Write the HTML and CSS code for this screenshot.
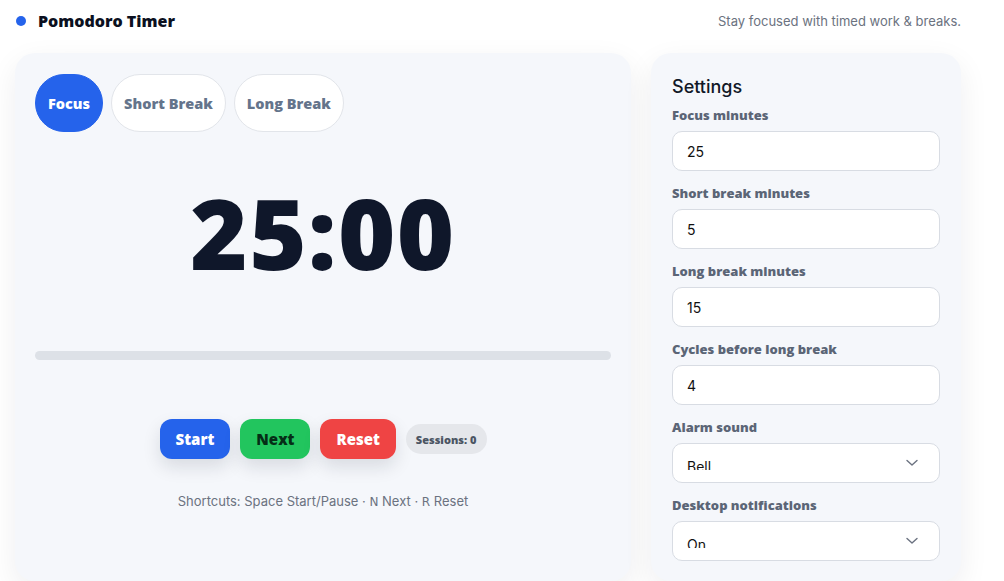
FILE: index.html
```html
<!DOCTYPE html>
<html lang="en">
<head>
<meta charset="utf-8">
<title>Pomodoro Timer</title>
<link rel="stylesheet" href="styles.css">
</head>
<body>
<div class="page">
  <header class="topbar">
    <div class="brand"><span class="dot"></span><span class="brand-name">Pomodoro Timer</span></div>
    <div class="tagline">Stay focused with timed work &amp; breaks.</div>
  </header>
  <main class="layout">
    <section class="card timer-card">
      <div class="tabs">
        <button class="tab active">Focus</button>
        <button class="tab">Short Break</button>
        <button class="tab">Long Break</button>
      </div>
      <div class="clock">25:00</div>
      <div class="progress"><div class="progress-fill" style="width:0%"></div></div>
      <div class="controls">
        <button class="btn btn-start">Start</button>
        <button class="btn btn-next">Next</button>
        <button class="btn btn-reset">Reset</button>
        <span class="sessions">Sessions: 0</span>
      </div>
      <p class="shortcuts">Shortcuts: Space Start/Pause · <kbd>N</kbd> Next · <kbd>R</kbd> Reset</p>
    </section>
    <aside class="card settings-card">
      <h2 class="settings-title">Settings</h2>
      <div class="field">
        <label class="field-label">Focus minutes</label>
        <div class="input">25</div>
      </div>
      <div class="field">
        <label class="field-label">Short break minutes</label>
        <div class="input">5</div>
      </div>
      <div class="field">
        <label class="field-label">Long break minutes</label>
        <div class="input">15</div>
      </div>
      <div class="field">
        <label class="field-label">Cycles before long break</label>
        <div class="input">4</div>
      </div>
      <div class="field">
        <label class="field-label">Alarm sound</label>
        <div class="input select"><span class="select-value">Bell</span>
          <svg class="chev" width="12" height="8" viewBox="0 0 12 8"><path d="M1 1.5 L6 6 L11 1.5" fill="none" stroke="#6b7280" stroke-width="1.4" stroke-linecap="round" stroke-linejoin="round"/></svg>
        </div>
      </div>
      <div class="field">
        <label class="field-label">Desktop notifications</label>
        <div class="input select"><span class="select-value">On</span>
          <svg class="chev" width="12" height="8" viewBox="0 0 12 8"><path d="M1 1.5 L6 6 L11 1.5" fill="none" stroke="#6b7280" stroke-width="1.4" stroke-linecap="round" stroke-linejoin="round"/></svg>
        </div>
      </div>
    </aside>
  </main>
</div>
</body>
</html>
```
FILE: styles.css
```css
* { box-sizing: border-box; }
html, body { margin: 0; padding: 0; background: #ffffff; }
body {
  font-family: Inter, "Noto Sans", "DejaVu Sans", sans-serif;
  color: #111827;
  overflow: hidden;
}
.page {
  width: 946px;
  margin-left: 15px;
}
.topbar {
  display: flex;
  align-items: center;
  justify-content: space-between;
  height: 42px;
}
.brand { display: flex; align-items: center; gap: 12px; }
.dot {
  width: 10px; height: 10px; border-radius: 50%;
  background: #2563eb;
  margin-left: 1px;
}
.brand-name {
  font-family: "Open Sans", Inter, sans-serif;
  font-weight: 800;
  font-size: 16px;
  color: #0b1020;
}
.tagline {
  font-size: 13px;
  color: #6b7280;
}
.layout {
  display: grid;
  grid-template-columns: 1fr 310px;
  gap: 20px;
  margin-top: 11px;
}
.card {
  background: #f5f7fb;
  border-radius: 20px;
  box-shadow: 0 10px 30px rgba(15, 23, 42, 0.07);
}
.timer-card {
  padding: 21px 20px 20px;
  display: flex;
  flex-direction: column;
}
.tabs { display: flex; gap: 8px; }
.tab {
  font-family: "Open Sans", Inter, sans-serif;
  font-size: 14.5px;
  font-weight: 800;
  height: 58px;
  padding: 0 12px;
  border-radius: 999px;
  border: 1px solid #e2e5ea;
  background: #ffffff;
  color: #64748b;
}
.tab.active {
  background: #2563eb;
  border-color: #2563eb;
  color: #ffffff;
}
.clock {
  margin-top: 51px;
  text-align: center;
  font-family: "Open Sans", Inter, sans-serif;
  font-size: 98px;
  line-height: 98px;
  font-weight: 800;
  letter-spacing: 1.5px;
  color: #0f172a;
}
.progress {
  margin-top: 70px;
  height: 9px;
  border-radius: 999px;
  background: #dde1e7;
  overflow: hidden;
}
.progress-fill { height: 100%; background: #2563eb; }
.controls {
  margin-top: 59px;
  display: flex;
  justify-content: center;
  align-items: center;
  gap: 10px;
}
.btn {
  font-family: "Open Sans", Inter, sans-serif;
  font-size: 15px;
  font-weight: 800;
  height: 40px;
  padding: 0 16px;
  border: none;
  border-radius: 12px;
  box-shadow: 0 8px 18px rgba(15, 23, 42, 0.12);
}
.btn-start { background: #2563eb; color: #ffffff; }
.btn-next { background: #22c55e; color: #052e16; }
.btn-reset { background: #ef4444; color: #ffffff; }
.sessions {
  display: inline-flex;
  align-items: center;
  height: 30px;
  padding: 0 10px;
  border-radius: 999px;
  background: #e5e7eb;
  color: #4b5563;
  font-family: "Open Sans", Inter, sans-serif;
  font-size: 11px;
  font-weight: 800;
}
.shortcuts {
  margin: 33px 0 0;
  text-align: center;
  font-size: 13px;
  line-height: 18px;
  color: #6b7280;
}
kbd {
  font-family: "DejaVu Sans", sans-serif;
  font-size: 12px;
}
.settings-card {
  padding: 22px 21px 20px 21px;
  display: flex;
  flex-direction: column;
  gap: 13px;
}
.settings-title {
  margin: 0 0 -6px;
  font-size: 18px;
  line-height: 24px;
  font-weight: 500;
  color: #111827;
}
.field { display: flex; flex-direction: column; gap: 7px; }
.field-label {
  font-family: "Open Sans", Inter, sans-serif;
  font-size: 13px;
  line-height: 18px;
  font-weight: 800;
  color: #5b6576;
}
.input {
  height: 40px;
  border: 1px solid #d8dce3;
  border-radius: 10px;
  background: #ffffff;
  padding: 0 14px;
  display: flex;
  align-items: center;
  font-size: 14px;
  color: #111111;
}
.select {
  align-items: flex-start;
  justify-content: space-between;
}
.select-value {
  display: block;
  margin-top: 14px;
  height: 12px;
  line-height: 17px;
  overflow: hidden;
}
.chev { margin-top: 15px; margin-right: 7px; }
```
